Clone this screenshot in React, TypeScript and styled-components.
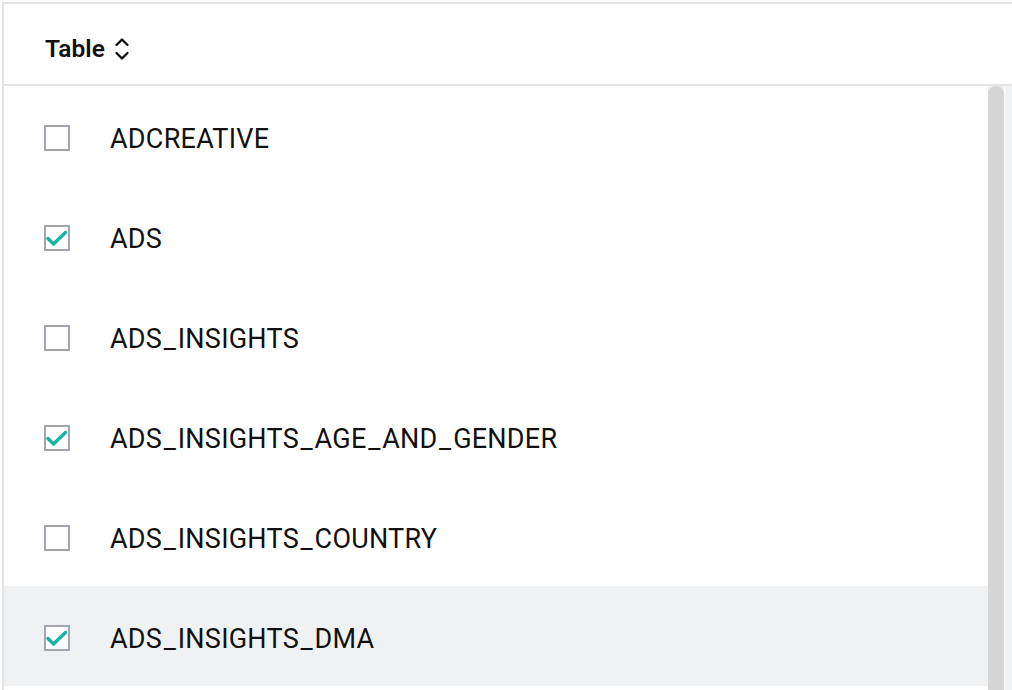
import React from 'react';
import styled, { createGlobalStyle } from 'styled-components';

const tables = [
  { name: 'ADCREATIVE', checked: false },
  { name: 'ADS', checked: true },
  { name: 'ADS_INSIGHTS', checked: false },
  { name: 'ADS_INSIGHTS_AGE_AND_GENDER', checked: true },
  { name: 'ADS_INSIGHTS_COUNTRY', checked: false },
  { name: 'ADS_INSIGHTS_DMA', checked: true, hovered: true },
];

// underscores are wider in the reference font, so give them a little room
const renderName = (name: string) =>
  name.split('_').map((part, i) => (
    <React.Fragment key={i}>
      {i > 0 && <Underscore>_</Underscore>}
      {part}
    </React.Fragment>
  ));

const App = () => {
  return (
    <>
      <GlobalStyle />
      <Panel>
        <Header>
          <HeaderLabel>
            Table
            <svg width="16" height="26" viewBox="0 0 16 26" fill="none">
              <path d="M2.5 9 L8 3.5 L13.5 9" stroke="#111" strokeWidth="2.4" strokeLinecap="round" strokeLinejoin="round" />
              <path d="M2.5 17 L8 22.5 L13.5 17" stroke="#111" strokeWidth="2.4" strokeLinecap="round" strokeLinejoin="round" />
            </svg>
          </HeaderLabel>
        </Header>
        <Body>
          <List>
            {tables.map((t) => (
              <Row key={t.name} $hovered={!!t.hovered}>
                <Checkbox>
                  {t.checked && (
                    <svg width="22" height="22" viewBox="0 0 22 22" fill="none">
                      <path d="M2 11.5 L7.5 17 L19.5 5.5" stroke="#17b2a5" strokeWidth="3.4" strokeLinecap="round" strokeLinejoin="round" />
                    </svg>
                  )}
                </Checkbox>
                <RowName>{renderName(t.name)}</RowName>
              </Row>
            ))}
          </List>
          <ScrollTrack>
            <ScrollThumb />
            <ScrollEdge />
          </ScrollTrack>
        </Body>
      </Panel>
    </>
  );
};

const GlobalStyle = createGlobalStyle`
  html, body {
    margin: 0;
    padding: 0;
    background: #ffffff;
    overflow: hidden;
    height: 690px;
  }
  body {
    font-family: Roboto, "Liberation Sans", sans-serif;
    color: #111111;
  }
`;

const Panel = styled.div`
  margin: 2px 0 0 2px;
  border-top: 2px solid #e4e4e4;
  border-left: 2px solid #e4e4e4;
  height: 686px;
  overflow: hidden;
  display: flex;
  flex-direction: column;
`;

const Header = styled.div`
  height: 82px;
  box-sizing: border-box;
  padding-top: 9px;
  flex-shrink: 0;
  display: flex;
  align-items: center;
  padding-left: 41px;
  border-bottom: 2px solid #e4e4e4;
`;

const HeaderLabel = styled.div`
  display: flex;
  align-items: center;
  gap: 9px;
  font-size: 24.5px;
  font-weight: 600;
  color: #111111;
`;

const Body = styled.div`
  flex: 1;
  display: flex;
  min-height: 0;
`;

const List = styled.div`
  flex: 1;
  display: flex;
  flex-direction: column;
`;

const Row = styled.div<{ $hovered: boolean }>`
  height: 100px;
  flex-shrink: 0;
  display: flex;
  align-items: center;
  gap: 40px;
  padding-left: 40px;
  background: ${(p) => (p.$hovered ? '#f0f1f3' : 'transparent')};
`;

const Checkbox = styled.div`
  width: 22px;
  height: 22px;
  border: 2px solid #a4a4b2;
  background: #ffffff;
  display: flex;
  align-items: center;
  justify-content: center;
  margin-top: 3px;
  flex-shrink: 0;
`;

const RowName = styled.span`
  font-size: 27px;
  font-weight: 400;
  letter-spacing: 0.25px;
  padding-top: 5px;
  color: #111111;
  white-space: nowrap;
`;

const Underscore = styled.span`
  margin: 0 1.6px;
`;

const ScrollTrack = styled.div`
  width: 24px;
  flex-shrink: 0;
  display: flex;
  background: #f0f1f3;
`;

const ScrollThumb = styled.div`
  width: 16px;
  background: #d6d6d6;
  border-radius: 8px 8px 0 0;
`;

const ScrollEdge = styled.div`
  width: 2px;
  background: #f7f7f8;
`;

export default App;
